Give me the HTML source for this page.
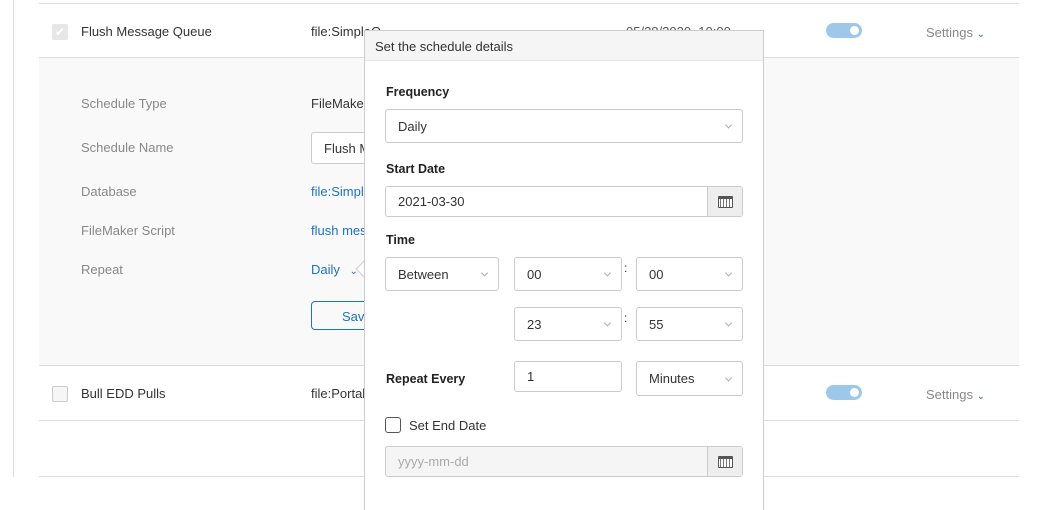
<!DOCTYPE html>
<html style="overflow:hidden;width:1054px;height:510px"><head><style>
*{box-sizing:border-box;margin:0;padding:0}
body{width:1054px;height:510px;background:#fff;font-family:"Liberation Sans",sans-serif;font-size:13px;color:#333;position:relative;overflow:hidden}
.a{position:absolute;white-space:nowrap}
.hl{position:absolute;height:1px;background:#ddd;left:39px;width:980px}
.lbl{position:absolute;left:81px;color:#888;font-size:13px}
.sel{position:absolute;border:1px solid #ccc;border-radius:3px;background:#fff;font-size:13px;color:#333;padding-left:12px;display:flex;align-items:center;white-space:nowrap}
.chev{position:absolute;right:11px;top:50%;width:5px;height:5px;border-right:1px solid #aaa;border-bottom:1px solid #aaa;transform:translateY(-70%) rotate(45deg)}
.b{position:absolute;left:21px;font-weight:bold;font-size:12.5px;color:#222}
.cal{position:absolute;right:0;top:0;bottom:0;width:35px;background:#eee;border-left:1px solid #ccc;display:flex;align-items:center;justify-content:center}
.cal i{display:block;width:15px;height:12px;border:1px solid #555;border-top-width:3px;border-radius:1px;background:repeating-linear-gradient(90deg,#fff 0 1px,#777 1px 2px,#fff 2px 3px)}
</style></head><body>
<div class="a" style="left:13px;top:0;width:1px;height:477px;background:#ddd"></div>
<div class="hl" style="top:3px"></div>
<div class="a" style="left:39px;top:57px;width:980px;height:308px;background:#f9f9f9"></div>
<div class="hl" style="top:57px"></div>
<div class="hl" style="top:365px"></div>
<div class="hl" style="top:420px"></div>
<div class="hl" style="top:476px"></div>
<div class="a" style="left:52px;top:24px;width:16px;height:16px;background:#e6e6e6;border-radius:2px;color:#fff;font-size:12px;text-align:center;line-height:16px">✔</div>
<div class="a" style="left:81px;top:24px">Flush Message Queue</div>
<div class="a" style="left:311px;top:24px">file:SimpleQ</div>
<div class="a" style="left:626px;top:24px;color:#555">05/28/2020, 10:00</div>
<div class="a" style="left:826px;top:23px;width:36px;height:15px;border-radius:8px;background:#9ec8eb"><div class="a" style="right:3px;top:3px;width:9px;height:9px;border-radius:50%;background:#fff"></div></div>
<div class="a" style="left:926px;top:25px;color:#888">Settings <span style="color:#1a73c9;font-size:10px">⌄</span></div>
<div class="lbl" style="top:96px">Schedule Type</div>
<div class="a" style="left:311px;top:96px">FileMaker</div>
<div class="lbl" style="top:140px">Schedule Name</div>
<div class="a" style="left:311px;top:132px;width:60px;height:32px;border:1px solid #ccc;border-radius:3px;background:#fff;padding:8px 12px;overflow:hidden">Flush Message</div>
<div class="lbl" style="top:184px">Database</div>
<div class="a" style="left:311px;top:184px;color:#1a73c9">file:Simple</div>
<div class="lbl" style="top:223px">FileMaker Script</div>
<div class="a" style="left:311px;top:223px;color:#1a73c9">flush mes</div>
<div class="lbl" style="top:262px">Repeat</div>
<div class="a" style="left:311px;top:262px;color:#1a73c9">Daily <span style="font-size:10px;margin-left:6px">⌄</span></div>
<div class="a" style="left:311px;top:301px;width:60px;height:29px;border:1px solid #1a73c9;border-radius:4px;color:#1a73c9;padding:7px 0 0 30px;overflow:hidden">Save</div>
<div class="a" style="left:52px;top:386px;width:16px;height:16px;border:1px solid #ccc;background:#f6f6f6;border-radius:2px"></div>
<div class="a" style="left:81px;top:386px">Bull EDD Pulls</div>
<div class="a" style="left:311px;top:386px">file:Portal</div>
<div class="a" style="left:826px;top:385px;width:36px;height:15px;border-radius:8px;background:#9ec8eb"><div class="a" style="right:3px;top:3px;width:9px;height:9px;border-radius:50%;background:#fff"></div></div>
<div class="a" style="left:926px;top:387px;color:#888">Settings <span style="color:#1a73c9;font-size:10px">⌄</span></div>

<div class="a" style="left:358px;top:263px;width:12px;height:12px;background:#fff;border-left:1px solid #ccc;border-bottom:1px solid #ccc;transform:rotate(45deg)"></div>
<div class="a" style="left:364px;top:30px;width:400px;height:490px;background:#fff;border:1px solid #ccc;border-bottom:none">
 <div class="a" style="left:0;top:0;right:0;height:30px;background:#f5f5f5;border-bottom:1px solid #e5e5e5;padding:8px 10px;font-size:13px;color:#333">Set the schedule details</div>
 <div class="b" style="top:54px">Frequency</div>
 <div class="sel" style="left:20px;top:78px;width:358px;height:34px">Daily<span class="chev"></span></div>
 <div class="b" style="top:131px">Start Date</div>
 <div class="sel" style="left:20px;top:155px;width:358px;height:31px">2021-03-30<span class="cal"><i></i></span></div>
 <div class="b" style="top:202px">Time</div>
 <div class="sel" style="left:20px;top:226px;width:114px;height:34px">Between<span class="chev"></span></div>
 <div class="sel" style="left:149px;top:226px;width:108px;height:34px">00<span class="chev"></span></div>
 <div class="a" style="left:259px;top:230px;font-size:12px">:</div>
 <div class="sel" style="left:271px;top:226px;width:107px;height:34px">00<span class="chev"></span></div>
 <div class="sel" style="left:149px;top:276px;width:108px;height:34px">23<span class="chev"></span></div>
 <div class="a" style="left:259px;top:280px;font-size:12px">:</div>
 <div class="sel" style="left:271px;top:276px;width:107px;height:34px">55<span class="chev"></span></div>
 <div class="b" style="top:341px">Repeat Every</div>
 <div class="sel" style="left:149px;top:330px;width:108px;height:31px;align-items:flex-start;padding-top:7px">1</div>
 <div class="sel" style="left:271px;top:330px;width:107px;height:35px">Minutes<span class="chev"></span></div>
 <div class="a" style="left:20px;top:386px;width:16px;height:16px;border:1px solid #555;border-radius:3px"></div>
 <div class="a" style="left:44px;top:387px">Set End Date</div>
 <div class="sel" style="left:20px;top:415px;width:358px;height:31px;background:#f5f5f5;color:#aaa">yyyy-mm-dd<span class="cal"><i></i></span></div>
</div>
</body></html>
